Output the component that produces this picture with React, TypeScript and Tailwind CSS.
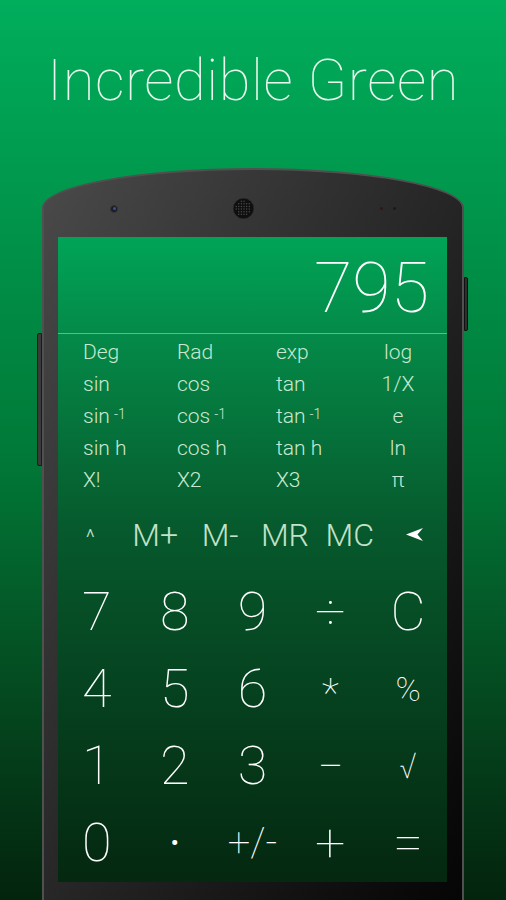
import React from "react";

const sci: (string | [string, string])[][] = [
  ["Deg", "Rad", "exp", "log"],
  ["sin", "cos", "tan", "1/X"],
  [["sin", "-1"], ["cos", "-1"], ["tan", "-1"], "e"],
  ["sin h", "cos h", "tan h", "ln"],
  ["X!", "X2", "X3", "π"],
];

const keys: { label: string; cls?: string }[][] = [
  [{ label: "7" }, { label: "8" }, { label: "9" }, { label: "÷" }, { label: "C" }],
  [{ label: "4" }, { label: "5" }, { label: "6" }, { label: "*", cls: "text-[40px] pt-[10px]" }, { label: "%", cls: "text-[34px]" }],
  [{ label: "1" }, { label: "2" }, { label: "3" }, { label: "−", cls: "text-[46px]" }, { label: "√", cls: "text-[36px]" }],
  [{ label: "0" }, { label: "•", cls: "text-[30px]" }, { label: "+/-", cls: "text-[40px]" }, { label: "+" }, { label: "=" }],
];

const thin = { fontFamily: "'Roboto Thin', Roboto, 'Noto Sans', sans-serif" };

function Speaker() {
  const dots: React.ReactNode[] = [];
  for (let y = -7; y <= 7; y += 2.5) {
    for (let x = -7; x <= 7; x += 2.5) {
      if (x * x + y * y < 56) dots.push(<circle key={`${x}_${y}`} cx={10 + x} cy={10 + y} r="0.7" fill="#4a4a4a" />);
    }
  }
  return (
    <svg width="21" height="21" viewBox="0 0 20 20">
      <circle cx="10" cy="10" r="9.8" fill="#0f0f0f" stroke="#2c2c2c" strokeWidth="0.6" />
      {dots}
    </svg>
  );
}

function Cell({ v, last }: { v: string | [string, string]; last?: boolean }) {
  return (
    <div className={`flex items-center h-[32px] ${last ? "justify-center" : ""}`}>
      {Array.isArray(v) ? (
        <span>
          {v[0]}
          <sup className="text-[14px] ml-[4px] relative -top-[4px]">{v[1]}</sup>
        </span>
      ) : (
        <span>{v}</span>
      )}
    </div>
  );
}

export default function App() {
  return (
    <div
      className="w-[506px] h-[900px] overflow-hidden flex flex-col items-center bg-gradient-to-b from-[#00ae5c] via-[#007a38] via-50% to-[#03240d]"
      style={{ fontFamily: "Roboto, 'Noto Sans', sans-serif" }}
    >
      <h1 className="mt-[45px] text-[58px] leading-[70px] font-thin text-[#eaf7ee] tracking-[0.5px]" style={thin}>
        Incredible Green
      </h1>

      <div className="relative mt-[53px] w-[422px] shrink-0">
        {/* side buttons */}
        <div className="absolute -left-[5px] top-[165px] w-[5px] h-[133px] rounded-l-[2px] bg-[#3a3a3a] border border-[#1b1b1b]" />
        <div className="absolute -right-[4px] top-[109px] w-[4px] h-[54px] rounded-r-[2px] bg-[#2e2e2e] border border-[#111]" />

        <div className="relative h-[760px] rounded-tl-[50%_40px] rounded-tr-[50%_40px] border-[2px] border-[#505050] bg-gradient-to-br from-[#4a4a4a] via-[#262626] to-[#050505] px-[14px]">
          {/* top bezel */}
          <div className="h-[67px] flex items-center justify-between pt-[10px]">
            <div className="ml-[52px] w-[8px] h-[8px] rounded-full bg-[#1c1c28] border border-[#333] flex items-center justify-center">
              <div className="w-[3px] h-[3px] rounded-full bg-[#3c4fa0]" />
            </div>
            <div className="-ml-[12px]">
              <Speaker />
            </div>
            <div className="mr-[52px] flex gap-[10px]">
              <div className="w-[3px] h-[3px] rounded-full bg-[#2a1a14]" />
              <div className="w-[3px] h-[3px] rounded-full bg-[#1a1a1a]" />
            </div>
          </div>

          {/* screen */}
          <div className="w-[389px] h-[645px] bg-gradient-to-b from-[#00a457] via-[#065a2d] via-45% to-[#042810] flex flex-col">
            <div className="h-[96px] flex items-center justify-end pr-[18px] pt-[6px]">
              <span className="text-[70px] leading-none font-thin text-white" style={thin}>795</span>
            </div>
            <div className="h-px bg-[#4ec383]" />

            <div className="pt-[2px] pl-[25px] grid grid-cols-[94px_99px_92px_60px] text-[21px] font-light text-[#c9e8d0] leading-none">
              {sci.map((row, i) =>
                row.map((v, j) => <Cell key={`${i}-${j}`} v={v} last={j === 3} />)
              )}
            </div>

            <div className="h-[77px] grid grid-cols-6 items-center text-[32px] font-light text-[#c2e2c9] leading-none">
              <div className="flex justify-center text-[22px] pt-[6px]">^</div>
              <div className="flex justify-center">M+</div>
              <div className="flex justify-center">M-</div>
              <div className="flex justify-center">MR</div>
              <div className="flex justify-center">MC</div>
              <div className="flex justify-center">
                <svg width="17" height="13" viewBox="0 0 17 13">
                  <polygon points="0,6.5 17,0 11.5,6.5 17,13" fill="#ffffff" />
                </svg>
              </div>
            </div>

            {keys.map((row, i) => (
              <div key={i} className="h-[77px] grid grid-cols-5 items-center text-white font-thin leading-none" style={thin}>
                {row.map((k, j) => (
                  <div key={j} className={`flex justify-center ${k.cls ?? "text-[54px]"}`}>
                    {k.label}
                  </div>
                ))}
              </div>
            ))}
          </div>
        </div>
      </div>
    </div>
  );
}
